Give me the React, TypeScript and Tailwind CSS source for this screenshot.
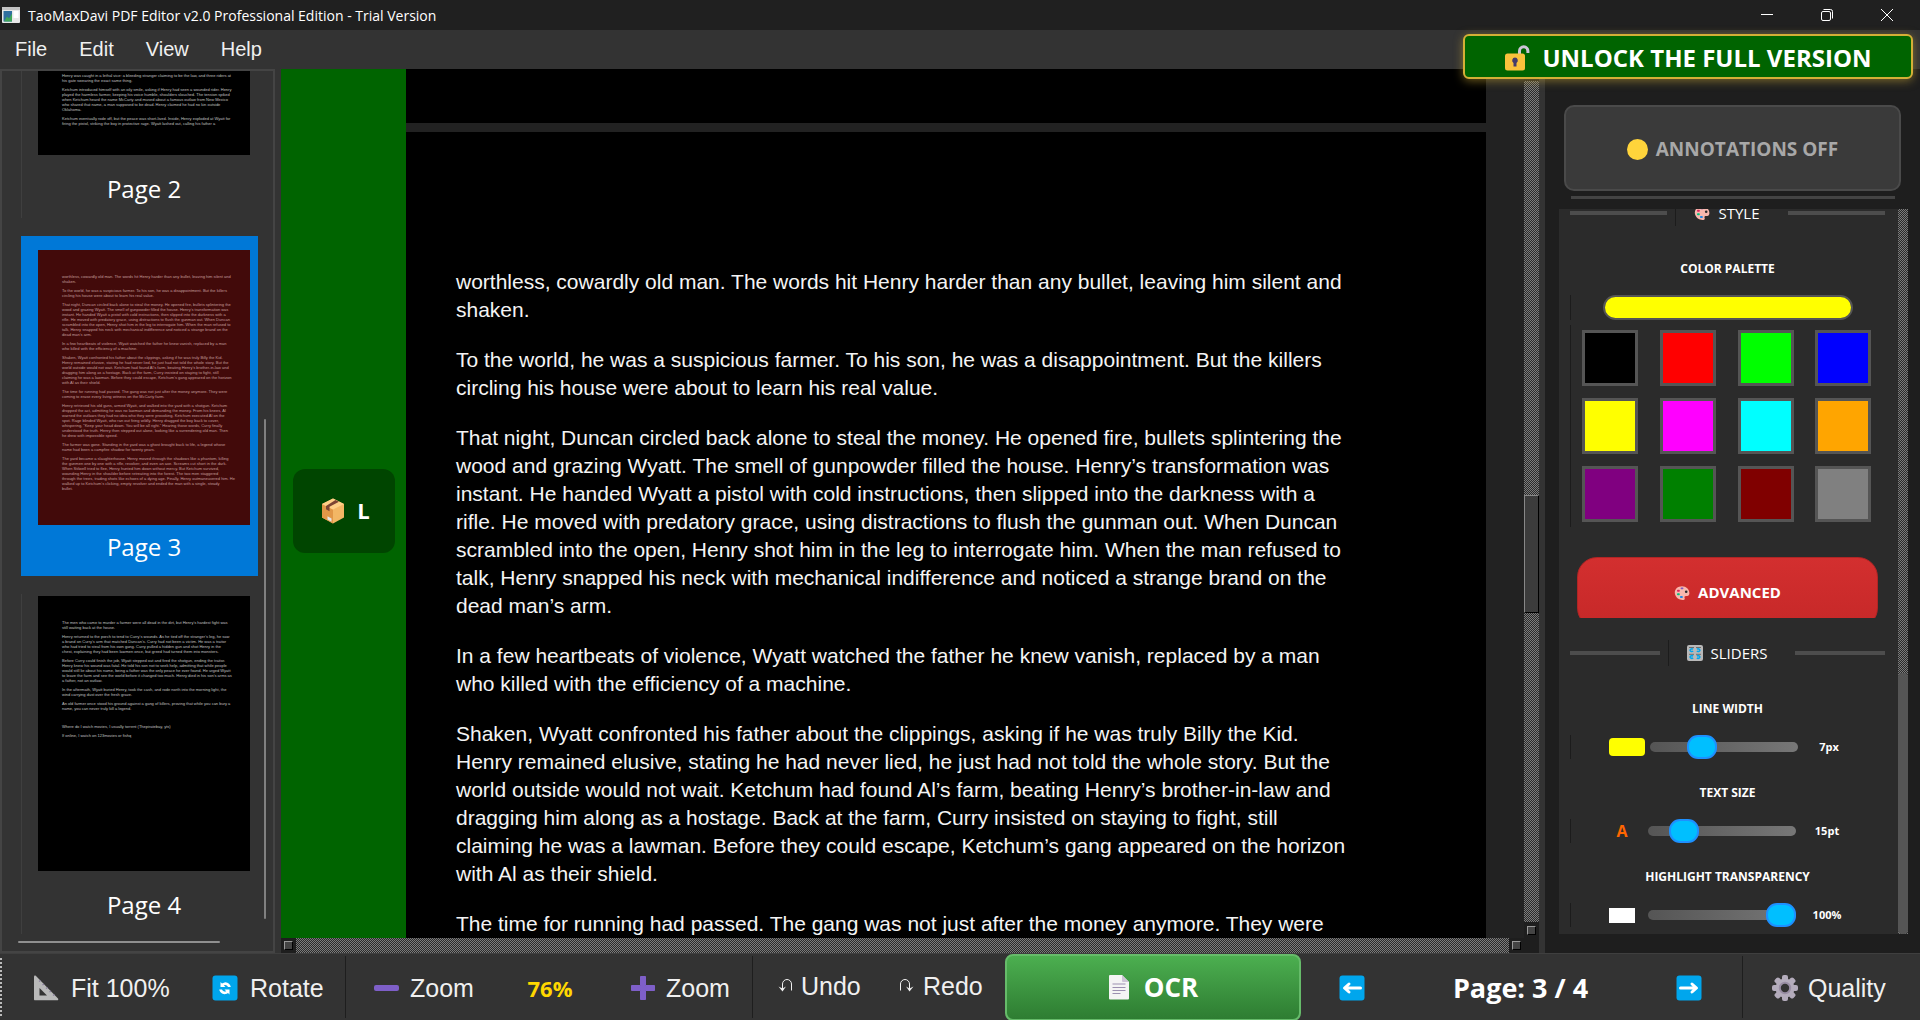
import { useState, type ReactNode } from "react";

const PAGE_2 = [
  [
    "Henry was caught in a lethal vice: a bleeding stranger claiming to be the law, and three riders at",
    "his gate swearing the exact same thing.",
  ],
  [
    "Ketchum introduced himself with an oily smile, asking if Henry had seen a wounded rider. Henry",
    "played the harmless farmer, keeping his voice humble, shoulders slouched. The tension spiked",
    "when Ketchum heard the name McCarty and mused about a famous outlaw from New Mexico",
    "who shared that name, a man supposed to be dead. Henry claimed he had no kin outside",
    "Oklahoma.",
  ],
  [
    "Ketchum eventually rode off, but the peace was short-lived. Inside, Henry exploded at Wyatt for",
    "firing the pistol, striking the boy in protective rage. Wyatt lashed out, calling his father a",
  ],
];

const PAGE_3 = [
  [
    "worthless, cowardly old man. The words hit Henry harder than any bullet, leaving him silent and",
    "shaken.",
  ],
  [
    "To the world, he was a suspicious farmer. To his son, he was a disappointment. But the killers",
    "circling his house were about to learn his real value.",
  ],
  [
    "That night, Duncan circled back alone to steal the money. He opened fire, bullets splintering the",
    "wood and grazing Wyatt. The smell of gunpowder filled the house. Henry’s transformation was",
    "instant. He handed Wyatt a pistol with cold instructions, then slipped into the darkness with a",
    "rifle. He moved with predatory grace, using distractions to flush the gunman out. When Duncan",
    "scrambled into the open, Henry shot him in the leg to interrogate him. When the man refused to",
    "talk, Henry snapped his neck with mechanical indifference and noticed a strange brand on the",
    "dead man’s arm.",
  ],
  [
    "In a few heartbeats of violence, Wyatt watched the father he knew vanish, replaced by a man",
    "who killed with the efficiency of a machine.",
  ],
  [
    "Shaken, Wyatt confronted his father about the clippings, asking if he was truly Billy the Kid.",
    "Henry remained elusive, stating he had never lied, he just had not told the whole story. But the",
    "world outside would not wait. Ketchum had found Al’s farm, beating Henry’s brother-in-law and",
    "dragging him along as a hostage. Back at the farm, Curry insisted on staying to fight, still",
    "claiming he was a lawman. Before they could escape, Ketchum’s gang appeared on the horizon",
    "with Al as their shield.",
  ],
  [
    "The time for running had passed. The gang was not just after the money anymore. They were",
    "coming to erase every living witness on the McCarty farm.",
  ],
  [
    "Henry retrieved his old guns, armed Wyatt, and walked into the yard with a shotgun. Ketchum",
    "dropped the act, admitting he was no lawman and demanding the money. From his knees, Al",
    "warned the outlaws they had no idea who they were provoking. Ketchum executed Al on the",
    "spot. Rage blinded Wyatt, who ran out firing wildly. Henry dragged the boy back to cover,",
    "whispering, “Keep your head down. You will be all right.” Hearing those words, Curry finally",
    "understood the truth. Henry then stepped out alone, looking like a surrendering old man. Then",
    "he drew with impossible speed.",
  ],
  [
    "The farmer was gone. Standing in the yard was a ghost brought back to life, a legend whose",
    "name had been a campfire shadow for twenty years.",
  ],
  [
    "The yard became a slaughterhouse. Henry moved through the shadows like a phantom, killing",
    "the gunmen one by one with a rifle, revolver, and even an axe. Screams cut short in the dark.",
    "When Stilwell tried to flee, Henry hunted him down without mercy. But Ketchum survived,",
    "wounding Henry in the shoulder before retreating into the forest. The two men staggered",
    "through the trees, trading shots like echoes of a dying age. Finally, Henry outmaneuvered him. He",
    "walked up to Ketchum’s clicking, empty revolver and ended the man with a single, steady",
    "bullet.",
  ],
];

const PAGE_4 = [
  [
    "The men who came to murder a farmer were all dead in the dirt, but Henry’s hardest fight was",
    "still waiting back at the house.",
  ],
  [
    "Henry returned to the porch to tend to Curry’s wounds. As he tied off the stranger’s leg, he saw",
    "a brand on Curry’s arm that matched Duncan’s. Curry had not been a victim. He was a traitor",
    "who had tried to steal from his own gang. Curry pulled a hidden gun and shot Henry in the",
    "chest, explaining they had been lawmen once, but greed had turned them into monsters.",
  ],
  [
    "Before Curry could finish the job, Wyatt stepped out and fired the shotgun, ending the traitor.",
    "Henry knew his wound was fatal. He told his son not to seek help, admitting that while people",
    "would still lie about his name, being a father was the only peace he ever found. He urged Wyatt",
    "to leave the farm and see the world before it changed too much. Henry died in his son’s arms as",
    "a father, not an outlaw.",
  ],
  [
    "In the aftermath, Wyatt buried Henry, took the cash, and rode north into the morning light, the",
    "wind carrying dust over the fresh grave.",
  ],
  [
    "An old farmer once stood his ground against a gang of killers, proving that while you can bury a",
    "name, you can never truly kill a legend.",
  ],
  [""],
  ["Where do I watch movies, I usually torrent (Thepiratebay, yts)"],
  ["If online, I watch on 123movies or fishq"],
];

// paragraphs of page 3 that fit the viewport at 76%
const VISIBLE = [...PAGE_3.slice(0, 5), PAGE_3[5].slice(0, 1)];

const SWATCHES = [
  { name: "Black", className: "bg-black" },
  { name: "Red", className: "bg-[#ff0000]" },
  { name: "Lime", className: "bg-[#00ff00]" },
  { name: "Blue", className: "bg-[#0000ff]" },
  { name: "Yellow", className: "bg-[#ffff00]" },
  { name: "Magenta", className: "bg-[#ff00ff]" },
  { name: "Cyan", className: "bg-[#00ffff]" },
  { name: "Orange", className: "bg-[#ffa500]" },
  { name: "Purple", className: "bg-[#800080]" },
  { name: "Green", className: "bg-[#008000]" },
  { name: "Maroon", className: "bg-[#800000]" },
  { name: "Gray", className: "bg-[#808080]" },
];

const DITHER = "bg-[repeating-conic-gradient(#7c7c7c_0_25%,#2a2a2a_0_50%)] bg-[length:2px_2px]";

function PaletteIcon() {
  return (
    <svg viewBox="0 0 16 16" className="size-4 shrink-0">
      <path d="M8 1.2C3.8 1.2.8 4 .8 7.6c0 3.200 2.200 6 5.200 7 1 .4 2.300.5 3.500.4 1.200-.2 1.500-1.200 1.100-2.200-.4-1 .2-1.900 1.300-1.900h1.300c1.300 0 2.200-1 2.200-2.600C15.400 4.200 12.200 1.200 8 1.200z" fill="#f8b8ae" />
      <rect x="3" y="4.800" width="2.800" height="2" rx=".8" fill="#e0245e" />
      <rect x="6.600" y="2.400" width="2.800" height="1.800" rx=".8" fill="#7e57c2" />
      <rect x="3" y="8.300" width="2.800" height="2" rx=".8" fill="#00c17c" />
      <rect x="6" y="11" width="2.800" height="2" rx=".8" fill="#1e88e5" />
      <circle cx="12.200" cy="6.800" r="1.300" fill="#2b2b2b" />
    </svg>
  );
}

function KnobsIcon() {
  return (
    <svg viewBox="0 0 16 16" className="size-4 shrink-0">
      <rect width="16" height="16" rx="2" fill="#b9b9b9" />
      <path d="M2 2.500h5M9 2.500h5M2 9.300h5M9 9.300h5" stroke="#6d6d6d" strokeWidth="1" />
      <g fill="none" stroke="#00a6ed" strokeWidth="1.500">
        <path d="M6.200 4.200a1.900 1.300 0 1 0 0 2" />
        <path d="M9.800 4.200a1.900 1.300 0 1 1 0 2" />
        <path d="M6.200 11a1.900 1.300 0 1 0 0 2" />
        <path d="M9.800 11a1.900 1.300 0 1 1 0 2" />
      </g>
    </svg>
  );
}

function PackageIcon() {
  return (
    <svg viewBox="0 0 24 26" className="h-[26px] w-6">
      <path d="M12 .5 23 6v13.500L12 25.500 1 19.500V6z" fill="#f3b765" />
      <path d="M1 6l11 5.500v14L1 19.500z" fill="#e19747" />
      <path d="M12 .5 23 6l-11 5.500L1 6z" fill="#ffcf87" />
      <path d="M14.500 2 18 3.700 8.500 8.800v4.400L5 11.300V8z" fill="#7d4533" />
      <path d="M6.500 18.200l4 2.200v3.400l-4-2.200z" fill="#e6e6e6" />
    </svg>
  );
}

function UnlockIcon() {
  return (
    <svg viewBox="0 0 26 26" className="size-[26px]">
      <path d="M15.500 9V6a4.200 4.200 0 0 1 8.400 0v2" fill="none" stroke="#cdc4d6" strokeWidth="3" />
      <rect x="1" y="8.500" width="20" height="17" rx="2.500" fill="#f9c23c" />
      <path d="M11 12.500a3 3 0 0 0-1.500 5.500v3.500h3V18a3 3 0 0 0-1.500-5.500z" fill="#433b6b" />
    </svg>
  );
}

function SetSquareIcon() {
  return (
    <svg viewBox="0 0 26 26" className="size-[26px]">
      <path d="M1 1.500C1 .5 2 .2 3 1l22 22.500c.6.8.2 1.800-.8 1.800H2c-.6 0-1-.4-1-1z" fill="#b9b9b9" />
      <path d="M6.500 13l7.500 7.500H6.500z" fill="#333" />
      <path d="M6 6.500l1.500-1M9.500 10l1.500-1M13 13.500l1.500-1M16.500 17l1.500-1M20 20.500l1.500-1" stroke="#8b7f9e" strokeWidth="1.200" />
    </svg>
  );
}

function BlueTile({ children }: { children: ReactNode }) {
  return (
    <svg viewBox="0 0 26 26" className="size-[26px]">
      <rect x=".5" y=".5" width="25" height="25" rx="3" fill="#00a6ed" />
      {children}
    </svg>
  );
}

function DocIcon() {
  return (
    <svg viewBox="0 0 22 26" className="h-[26px] w-[22px]">
      <path d="M1 2a1 1 0 0 1 1-1h12l7 7v16.500a1 1 0 0 1-1 1H2a1 1 0 0 1-1-1z" fill="#f4f4f4" />
      <path d="M14 1l7 7h-6a1 1 0 0 1-1-1z" fill="#cdc4d6" />
      <path d="M4.500 10h13M4.500 13.500h13M4.500 16.500h13M4.500 19.500h8" stroke="#9b8fb0" strokeWidth="1.200" />
    </svg>
  );
}

function GearIcon() {
  return (
    <svg viewBox="0 0 26 26" className="size-[26px]">
      <g fill="#b4acbc">
        <rect x="10" y="0" width="6" height="26" rx="2" />
        <rect x="10" y="0" width="6" height="26" rx="2" transform="rotate(45 13 13)" />
        <rect x="10" y="0" width="6" height="26" rx="2" transform="rotate(90 13 13)" />
        <rect x="10" y="0" width="6" height="26" rx="2" transform="rotate(135 13 13)" />
        <circle cx="13" cy="13" r="9.500" />
      </g>
      <circle cx="13" cy="13" r="5.200" fill="#333" stroke="#998ea4" strokeWidth="2" />
    </svg>
  );
}

function HookArrow({ flip }: { flip?: boolean }) {
  return (
    <svg viewBox="0 0 16 16" className={flip ? "size-4 -scale-x-100" : "size-4"}>
      <path d="M14.500 12.500V6a4.500 4.500 0 0 0-9 0v6" fill="none" stroke="#f0f0f0" strokeWidth="1" />
      <path d="M1.500 8.500l4 5 3.500-5-3.500 2z" fill="#f0f0f0" />
    </svg>
  );
}

function TitleBar() {
  return (
    <header className="flex h-[30px] shrink-0 items-center bg-[#202020] text-white">
      <svg viewBox="0 0 18 16" className="ml-0.5 h-4 w-[18px]">
        <rect width="18" height="16" rx="1" fill="#e8e8e8" />
        <rect width="18" height="3" fill="#c3c3c3" />
        <rect x="1.500" y="4" width="8.500" height="10.500" fill="#2f6f9f" />
        <path d="M2 14.500l3-5 2 2 3-5v8z" fill="#3fa55a" />
        <rect x="11.500" y="4" width="5" height="7" fill="#fff" />
      </svg>
      <h1 className="ml-2 flex-1 pt-0.5 text-[14px] leading-5">TaoMaxDavi PDF Editor v2.0 Professional Edition - Trial Version</h1>
      <button type="button" aria-label="Minimize" className="flex h-full w-[60px] items-center justify-center">
        <svg viewBox="0 0 12 12" className="size-3"><path d="M0 5.500h12" stroke="#fff" /></svg>
      </button>
      <button type="button" aria-label="Restore" className="flex h-full w-[60px] items-center justify-center">
        <svg viewBox="0 0 12 12" className="size-3" fill="none" stroke="#fff">
          <rect x=".5" y="2.500" width="9" height="9" rx="1.500" />
          <path d="M2.500.5h7a2 2 0 0 1 2 2v7" />
        </svg>
      </button>
      <button type="button" aria-label="Close" className="mr-[3px] flex h-full w-[60px] items-center justify-center">
        <svg viewBox="0 0 12 12" className="size-3"><path d="M0 0l12 12M12 0L0 12" stroke="#fff" /></svg>
      </button>
    </header>
  );
}

function MenuBar() {
  return (
    <nav className="flex h-[39px] shrink-0 items-center gap-8 bg-[#333] pb-0.5 pl-[15px] font-['Liberation_Sans',sans-serif] text-[20px] leading-6 text-[#f0f0f0]">
      {["File", "Edit", "View", "Help"].map((item) => (
        <button key={item} type="button" className="h-full">
          {item}
        </button>
      ))}
    </nav>
  );
}

type ThumbProps = { label: string; paragraphs: string[][]; active?: boolean; tail?: boolean };

// `tail` sets the text at the foot of the sheet, for a page whose top is scrolled away
function Thumbnail({ label, paragraphs, active, tail }: ThumbProps) {
  return (
    <button
      type="button"
      className={
        active
          ? "flex h-[340px] w-[237px] shrink-0 flex-col bg-[#0078d7] pt-3.5 pl-[17px] text-left"
          : "flex h-[340px] w-[237px] shrink-0 flex-col border-l border-[#3f3f3f] pt-0.5 pl-4 text-left"
      }
    >
      <div
        className={`flex h-[275px] w-[212px] shrink-0 flex-col overflow-hidden pl-6 ${
          tail ? "justify-end pb-[25px]" : "pt-6"
        } ${active ? "bg-[#420a0a] text-[#c49c9c]" : "bg-black text-[#c0c0c0]"}`}
      >
        {paragraphs.map((lines, i) => (
          <p key={i} className="mb-1 min-h-[5px] font-['Liberation_Sans',sans-serif] text-[4px] leading-[5px] whitespace-nowrap">
            {lines.map((line) => (
              <span key={line} className="block">{line}</span>
            ))}
          </p>
        ))}
      </div>
      <span
        className={
          active
            ? "block w-[212px] pt-1.5 text-center text-[24px] leading-8"
            : "block w-[212px] pt-[18px] text-center text-[24px] leading-8"
        }
      >
        {label}
      </span>
    </button>
  );
}

function Sidebar() {
  return (
    <aside className="flex w-[275px] shrink-0 flex-col border-2 border-[#444] bg-[#333] text-white">
      <div className="flex min-h-0 flex-1 justify-between">
        <div className="flex h-full flex-col justify-end gap-[18px] overflow-hidden pb-[7px] pl-[19px]">
          <Thumbnail label="Page 2" paragraphs={PAGE_2} tail />
          <Thumbnail label="Page 3" paragraphs={PAGE_3} active />
          <Thumbnail label="Page 4" paragraphs={PAGE_4} />
        </div>
        <div className="mr-[7px] flex w-0.5 flex-col justify-end pb-[22px]">
          <div className="h-[500px] rounded bg-[#808080]" />
        </div>
      </div>
      <div className="mb-2 ml-4 h-0.5 w-[202px] rounded bg-[#909090]" />
    </aside>
  );
}

function PageView() {
  return (
    <main className="flex min-w-0 flex-1 flex-col bg-[#222]">
      <div className="flex min-h-0 flex-1">
        <div className="flex min-w-0 flex-1 overflow-hidden">
          <div className="flex w-[125px] shrink-0 items-center justify-center bg-[#006400] pt-3.5">
            <button type="button" className="flex h-[84px] w-[102px] items-center justify-center gap-3 rounded-xl bg-[#004500] pl-1 text-[22px] font-bold text-white">
              <PackageIcon />
              L
            </button>
          </div>
          <div className="flex min-w-0 flex-1 flex-col gap-[9px] overflow-hidden pr-[38px]">
            <div className="h-[54px] shrink-0 bg-black" />
            <article className="min-h-0 flex-1 overflow-hidden bg-black pt-[136px] pl-[50px]">
              {VISIBLE.map((lines, i) => (
                <p key={i} className="mb-[22px] font-['Liberation_Sans',sans-serif] text-[21px] leading-7 whitespace-nowrap text-[#f4f4f4] last:mb-0">
                  {lines.map((line) => (
                    <span key={line} className="block">{line}</span>
                  ))}
                </p>
              ))}
            </article>
          </div>
        </div>
        <div className={`flex w-[15px] shrink-0 flex-col ${DITHER}`}>
          <div className="h-3 bg-[#1e1e1e]" />
          <div className="mt-[414px] h-[118px] border border-t-[#888] border-r-black border-b-black border-l-[#888] bg-[#3c3c3c]" />
          <div className="mt-auto flex h-4 items-center justify-center bg-[#1e1e1e]">
            <div className="size-[9px] border border-t-[#999] border-r-black border-b-black border-l-[#999] bg-[#444]" />
          </div>
        </div>
      </div>
      <div className={`flex h-[15px] shrink-0 justify-between ${DITHER}`}>
        <div className="flex w-[15px] items-center justify-center bg-[#1e1e1e]">
          <div className="size-[9px] border border-t-[#999] border-r-black border-b-black border-l-[#999] bg-[#444]" />
        </div>
        <div className="flex w-[30px] items-center bg-[#1e1e1e] pl-[3px]">
          <div className="size-[9px] border border-t-[#999] border-r-black border-b-black border-l-[#999] bg-[#444]" />
        </div>
      </div>
    </main>
  );
}

function SectionTitle({ icon, children }: { icon: ReactNode; children: ReactNode }) {
  return (
    <div className="flex h-[26px] items-center gap-2 text-[15px] leading-5 text-white">
      <div className="h-1 flex-1 bg-[#4d4d4d]" />
      <h2 className="flex h-full items-center gap-2 border-l border-[#1c1c1c] pr-5 pl-[18px]">
        {icon}
        {children}
      </h2>
      <div className="h-1 flex-1 bg-[#4d4d4d]" />
    </div>
  );
}

type SliderProps = {
  id: string;
  label: string;
  unit: string;
  min: number;
  max: number;
  initial: number;
  marker: ReactNode;
};

function Slider({ id, label, unit, min, max, initial, marker }: SliderProps) {
  const [value, setValue] = useState(initial);

  return (
    <div className="mb-6 flex flex-col items-center last:mb-0">
      <label htmlFor={id} className="text-[12px] leading-5 font-bold">{label}</label>
      <div className="mt-4 flex h-6 w-full items-center border-l border-[#1c1c1c] pl-[38px]">
        <div className="flex min-w-[34px] shrink-0">{marker}</div>
        <input
          id={id}
          type="range"
          min={min}
          max={max}
          value={value}
          onChange={(e) => setValue(Number(e.target.value))}
          className="ml-[5px] h-2.5 w-[148px] appearance-none rounded-full bg-linear-to-r from-[#555] to-[#777] [&::-webkit-slider-thumb]:h-6 [&::-webkit-slider-thumb]:w-[30px] [&::-webkit-slider-thumb]:appearance-none [&::-webkit-slider-thumb]:rounded-[11px] [&::-webkit-slider-thumb]:border-2 [&::-webkit-slider-thumb]:border-[#1e90ff] [&::-webkit-slider-thumb]:bg-[#00bfff]"
        />
        <output htmlFor={id} className="w-[62px] text-center text-[11px] leading-4 font-bold">
          {value}{unit}
        </output>
      </div>
    </div>
  );
}

function AnnotationPanel() {
  const [current, setCurrent] = useState("bg-[#ffff00]");

  return (
    <aside className="flex w-[375px] shrink-0 flex-col bg-[#1e1e1e] pt-9 pb-[19px] text-white">
      <button
        type="button"
        className="mr-[19px] ml-[19px] flex h-[86px] shrink-0 items-center justify-center gap-2 rounded-[10px] border-2 border-[#4a4a4a] bg-[#3a3a3a] pt-0.5 text-[19px] font-bold text-[#a8a8a8]"
      >
        <span className="size-[21px] rounded-full bg-[#ffd43b]" />
        ANNOTATIONS OFF
      </button>
      <div className="mt-[5px] mr-[25px] ml-[26px] h-[3px] shrink-0 bg-[#444]" />

      <div className="mt-2.5 mr-3 ml-3.5 flex min-h-0 flex-1">
        <div className="min-h-0 flex-1 overflow-hidden bg-[#2b2b2b] pr-[13px] pl-[11px]">
          <div className="-mt-[9px]">
            <SectionTitle icon={<PaletteIcon />}>STYLE</SectionTitle>
          </div>
          <h3 className="mt-[33px] text-center text-[12px] leading-5 font-bold">COLOR PALETTE</h3>
          <div className="mt-4 border-l border-[#1c1c1c] px-8">
            <div className={`h-[25px] rounded-full border-2 border-[#555] ${current}`} />
          </div>
          <div className="mt-[5px] grid grid-cols-4 justify-items-start gap-x-[22px] gap-y-3 border-l border-[#1c1c1c] py-[5px] pr-3.5 pl-[11px]">
            {SWATCHES.map((s) => (
              <button
                key={s.name}
                type="button"
                aria-label={s.name}
                onClick={() => setCurrent(s.className)}
                className={`size-14 border-3 border-[#555] ${s.className}`}
              />
            ))}
          </div>
          <div className="mt-[30px] mr-[7px] ml-[7px] h-[61px] overflow-hidden">
            <button
              type="button"
              className="flex h-[71px] w-full items-center justify-center gap-2 rounded-[20px] border border-[#b02525] bg-linear-to-b from-[#d32f2f] to-[#c62828] text-[15px] font-bold"
            >
              <PaletteIcon />
              ADVANCED
            </button>
          </div>
          <div className="mt-[22px] mb-[33px]">
            <SectionTitle icon={<KnobsIcon />}>SLIDERS</SectionTitle>
          </div>
          <Slider id="line-width" label="LINE WIDTH" unit="px" min={1} max={20} initial={7} marker={<span className="h-[18px] w-9 rounded-sm bg-[#ffff00]" />} />
          <Slider id="text-size" label="TEXT SIZE" unit="pt" min={8} max={48} initial={15} marker={<span className="w-[26px] text-center text-[16px] leading-5 font-bold text-[#ff6600]">A</span>} />
          <Slider id="transparency" label="HIGHLIGHT TRANSPARENCY" unit="%" min={0} max={100} initial={100} marker={<span className="h-[15px] w-[26px] bg-white" />} />
        </div>
        <div className={`flex w-2.5 shrink-0 flex-col justify-end ${DITHER}`}>
          <div className="h-[261px] rounded bg-[#555]" />
        </div>
      </div>
    </aside>
  );
}

function Divider() {
  return <div className="my-0.5 w-px self-stretch bg-[#1e1e1e]" />;
}

function Toolbar() {
  return (
    <footer className="flex h-[67px] shrink-0 items-center border-t border-[#3f3f3f] bg-[#333] font-['Liberation_Sans',sans-serif] text-[25px] leading-8 text-[#f0f0f0]">
      <div className="my-1 w-[3px] self-stretch border-l-2 border-dotted border-[#bbb]" />
      <button type="button" className="flex w-[180px] items-center gap-3 pt-0.5 pl-[30px]">
        <SetSquareIcon />
        Fit 100%
      </button>
      <button type="button" className="flex w-[162px] items-center gap-3 pt-0.5 pl-[29px]">
        <BlueTile>
          <path d="M8.500 7v5h5l-1.700-1.700a3 3 0 0 1 4.200 1.700h2.800A5.500 5.500 0 0 0 10 8.500z" fill="#fff" />
          <path d="M17.500 19.500v-5h-5l1.700 1.700a3 3 0 0 1-4.200-1.700H7.200A5.500 5.500 0 0 0 16 18z" fill="#fff" />
        </BlueTile>
        Rotate
      </button>
      <Divider />
      <button type="button" className="flex w-[156px] items-center gap-2.5 pt-0.5 pl-7">
        <svg viewBox="0 0 26 26" className="size-[26px]"><rect x="0" y="10" width="25" height="6" rx="2" fill="#7e5fc8" /></svg>
        Zoom
      </button>
      <output className="w-[96px] pt-0.5 text-center font-['Open_Sans',sans-serif] text-[22px] font-bold text-[#ffd700]">76%</output>
      <button type="button" className="flex w-[154px] items-center gap-2.5 pt-0.5 pl-8">
        <svg viewBox="0 0 26 26" className="size-[26px]"><path d="M10.500 1.500h5v9h9v5h-9v9h-5v-9h-9v-5h9z" fill="#7e5fc8" stroke="#7e5fc8" strokeWidth="1" strokeLinejoin="round" /></svg>
        Zoom
      </button>
      <Divider />
      <button type="button" className="flex w-[124px] items-center gap-2 pb-0.5 pl-6">
        <HookArrow />
        Undo
      </button>
      <button type="button" className="flex w-[128px] items-center gap-2 pb-0.5 pl-[22px]">
        <HookArrow flip />
        Redo
      </button>
      <button
        type="button"
        className="flex h-[67px] w-[296px] items-center justify-center gap-3.5 rounded-lg border-2 border-[#66bb6a] bg-linear-to-b from-[#4caf50] to-[#2e7d32] font-['Open_Sans',sans-serif] text-[26px] font-bold text-white"
      >
        <DocIcon />
        OCR
      </button>
      <div className="flex flex-1 items-center justify-between pt-0.5 pr-10 pl-[38px]">
        <button type="button" aria-label="Previous page">
          <BlueTile>
            <path d="M21.500 13H6M10 9l-4.500 4 4.500 4" fill="none" stroke="#fff" strokeWidth="3" strokeLinecap="round" strokeLinejoin="round" />
          </BlueTile>
        </button>
        <span className="font-['Open_Sans',sans-serif] text-[27px] font-bold text-white">Page: 3 / 4</span>
        <button type="button" aria-label="Next page">
          <BlueTile>
            <path d="M4.500 13H20M16 9l4.500 4-4.500 4" fill="none" stroke="#fff" strokeWidth="3" strokeLinecap="round" strokeLinejoin="round" />
          </BlueTile>
        </button>
      </div>
      <Divider />
      <button type="button" className="flex w-[177px] items-center gap-2.5 pt-0.5 pl-[29px]">
        <GearIcon />
        Quality
      </button>
    </footer>
  );
}

export default function App() {
  return (
    <div className="relative flex h-screen flex-col overflow-hidden bg-[#333] font-['Open_Sans','Noto_Sans',sans-serif]">
      <TitleBar />
      <MenuBar />
      <div className="flex min-h-0 flex-1">
        <Sidebar />
        <div className="w-1.5 shrink-0 bg-[#333]" />
        <PageView />
        <div className="w-1.5 shrink-0 bg-[#333]" />
        <AnnotationPanel />
      </div>
      <Toolbar />
      <button
        type="button"
        className="absolute top-[34px] right-[7px] flex h-[45px] w-[450px] items-center justify-center gap-3 rounded-md border-2 border-[#d4af37] bg-[#006400] pt-0.5 text-[24px] leading-8 font-bold text-white shadow-[0_2px_10px_rgba(212,175,55,0.5)]"
      >
        <UnlockIcon />
        UNLOCK THE FULL VERSION
      </button>
    </div>
  );
}
